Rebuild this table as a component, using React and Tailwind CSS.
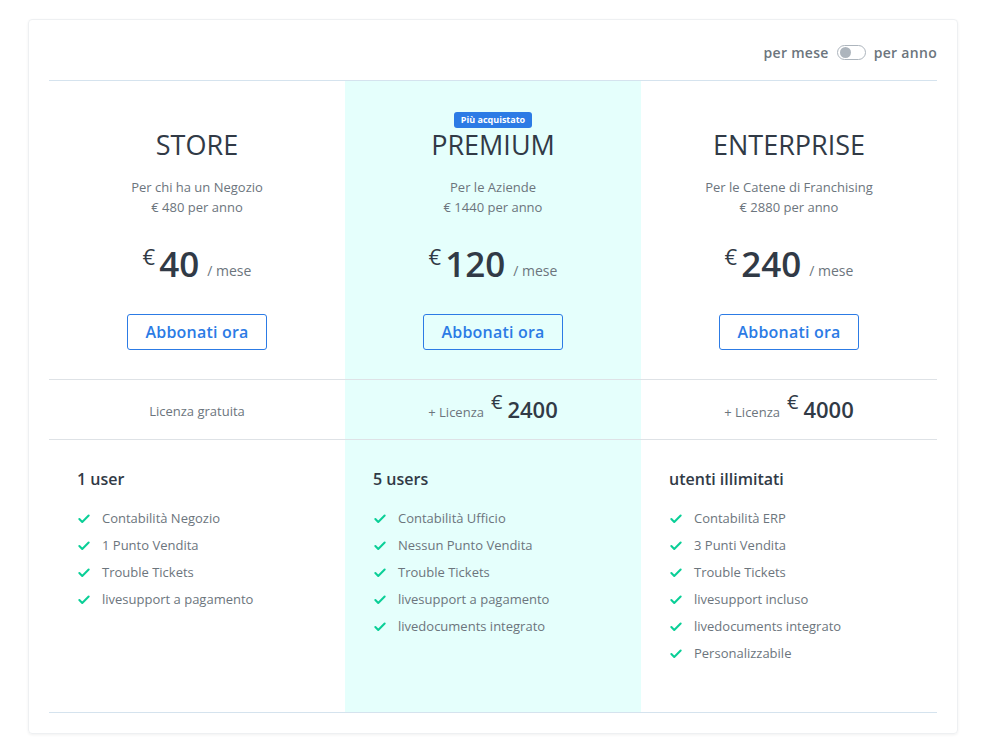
import React, { useState } from "react";
import { Check } from "lucide-react";

const piani = [
  {
    nome: "STORE",
    desc: "Per chi ha un Negozio",
    anno: "€ 480 per anno",
    prezzo: "40",
    licenza: null,
    utenti: "1 user",
    features: [
      "Contabilità Negozio",
      "1 Punto Vendita",
      "Trouble Tickets",
      "livesupport a pagamento",
    ],
  },
  {
    nome: "PREMIUM",
    desc: "Per le Aziende",
    anno: "€ 1440 per anno",
    prezzo: "120",
    licenza: "2400",
    utenti: "5 users",
    badge: true,
    features: [
      "Contabilità Ufficio",
      "Nessun Punto Vendita",
      "Trouble Tickets",
      "livesupport a pagamento",
      "livedocuments integrato",
    ],
  },
  {
    nome: "ENTERPRISE",
    desc: "Per le Catene di Franchising",
    anno: "€ 2880 per anno",
    prezzo: "240",
    licenza: "4000",
    utenti: "utenti illimitati",
    features: [
      "Contabilità ERP",
      "3 Punti Vendita",
      "Trouble Tickets",
      "livesupport incluso",
      "livedocuments integrato",
      "Personalizzabile",
    ],
  },
];

const App = () => {
  const [annuale, setAnnuale] = useState(false);

  return (
    <div className="min-h-screen bg-white pt-[19px] px-[28px] font-['Open_Sans',sans-serif]">
      <div className="rounded-[4px] border border-[#eef0f2] shadow-[0_1px_3px_rgba(0,0,0,0.06)] px-[20px] pb-[20px]">
        {/* toggle mensile / annuale */}
        <div className="h-[61px] flex items-center justify-end pt-[4px] gap-[8px] border-b border-[#d5e3ee]">
          <span className="text-[14px] tracking-[0.3px] font-semibold text-[#6c757d]">per mese</span>
          <button
            onClick={() => setAnnuale(!annuale)}
            className="w-[29px] h-[15px] rounded-full border border-[#adb5bd] bg-white flex items-center px-[2px]"
          >
            <span className={`w-[11px] h-[11px] rounded-full bg-[#adb5bd] ${annuale ? "ml-auto" : ""}`}></span>
          </button>
          <span className="text-[14px] tracking-[0.3px] font-semibold text-[#6c757d]">per anno</span>
        </div>

        <div className="grid grid-cols-3 border-b border-[#d5e3ee]">
          {piani.map((p) => (
            <div key={p.nome} className={`flex flex-col ${p.badge ? "bg-[#e5fffc]" : ""}`}>
              {/* intestazione */}
              <div className="flex flex-col items-center pt-[31px] pb-[29px] border-b border-[#dee2e6]">
                <div className="h-[16px] flex items-center">
                  {p.badge && (
                    <span className="bg-[#2c7be5] text-white text-[9px] font-bold rounded-[3px] px-[7px] h-[16px] leading-[16px]">
                      Più acquistato
                    </span>
                  )}
                </div>
                <h3 className="text-[27px] leading-[34px] text-[#313a46] font-normal">{p.nome}</h3>
                <p className="mt-[15px] text-[13px] leading-[20px] text-[#6c757d]">{p.desc}</p>
                <p className="text-[13px] leading-[20px] text-[#6c757d]">{p.anno}</p>
                <div className="mt-[25px] h-[44px] flex items-center text-[#313a46]">
                  <span className="text-[22px] self-start mt-[-2px] mr-[4px]">€</span>
                  <span className="text-[35px] font-semibold leading-[44px]">{p.prezzo}</span>
                  <span className="text-[14px] text-[#6c757d] ml-[8px] mt-[12px]">/ mese</span>
                </div>
                <button className="mt-[28px] w-[140px] h-[36px] rounded-[3px] border border-[#2c7be5] text-[#2c7be5] text-[16px] tracking-[0.2px] font-semibold">
                  Abbonati ora
                </button>
              </div>

              {/* licenza */}
              <div className="h-[60px] flex items-center justify-center border-b border-[#dee2e6] text-[#6c757d]">
                {p.licenza ? (
                  <div className="flex items-center">
                    <span className="text-[13px] mt-[6px]">+ Licenza</span>
                    <span className="text-[20px] text-[#313a46] self-start mt-[-6px] ml-[7px] mr-[5px]">€</span>
                    <span className="text-[22px] font-semibold text-[#313a46]">{p.licenza}</span>
                  </div>
                ) : (
                  <span className="text-[13px] mt-[4px]">Licenza gratuita</span>
                )}
              </div>

              {/* funzionalità */}
              <div className="h-[272px] pl-[28px] pt-[28px]">
                <h4 className="text-[16px] leading-[22px] font-semibold text-[#313a46]">{p.utenti}</h4>
                <ul className="mt-[15px]">
                  {p.features.map((f) => (
                    <li key={f} className="flex items-center h-[27px] text-[13px] text-[#6c757d]">
                      <Check size={14} strokeWidth={3.5} className="text-[#0acf97] mr-[11px]" />
                      {f}
                    </li>
                  ))}
                </ul>
              </div>
            </div>
          ))}
        </div>
      </div>
    </div>
  );
};

export default App;
